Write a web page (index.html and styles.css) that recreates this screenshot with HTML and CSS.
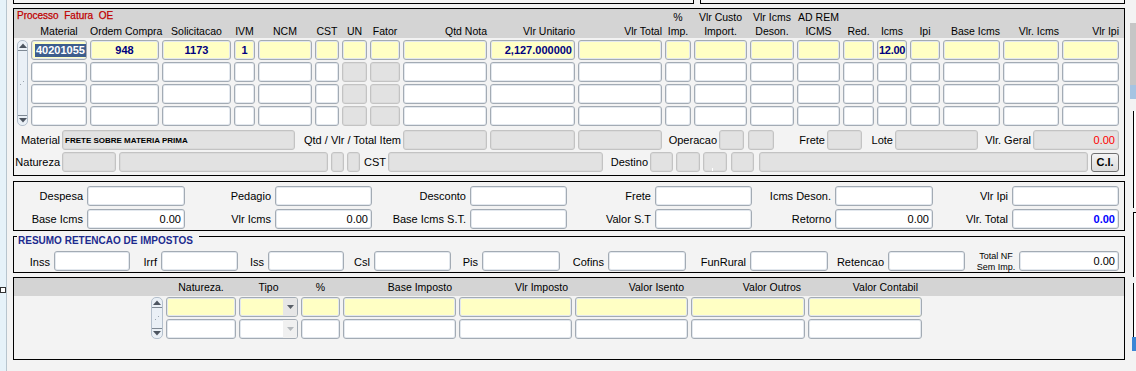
FILE: index.html
```html
<!DOCTYPE html>
<html lang="pt">
<head>
  <meta charset="UTF-8">
  <title>Processo Fatura OE</title>
  <link rel="stylesheet" href="styles.css">
</head>
<body>
  <div class="side"><span class="mark"></span></div>

  <div class="main">
    <div class="tops">
      <div class="tb1"></div>
      <div class="tb2"></div>
    </div>

    <!-- itens da nota -->
    <div class="frame f1">
      <div class="band">
        <div class="hgrid">
          <div class="title">Processo&nbsp; Fatura&nbsp; OE</div>
          <div class="h"></div>
          <div class="h c">Material</div>
          <div class="h c">Ordem Compra</div>
          <div class="h c">Solicitacao</div>
          <div class="h c">IVM</div>
          <div class="h c">NCM</div>
          <div class="h c">CST</div>
          <div class="h c">UN</div>
          <div class="h c">Fator</div>
          <div class="h r">Qtd Nota</div>
          <div class="h r">Vlr Unitario</div>
          <div class="h r">Vlr Total</div>
          <div class="h c">%<br>Imp.</div>
          <div class="h c">Vlr Custo<br>Import.</div>
          <div class="h c">Vlr Icms<br>Deson.</div>
          <div class="h c">AD REM<br>ICMS</div>
          <div class="h c">Red.</div>
          <div class="h c">Icms</div>
          <div class="h c">Ipi</div>
          <div class="h r">Base Icms</div>
          <div class="h r">Vlr. Icms</div>
          <div class="h r">Vlr Ipi</div>
        </div>
      </div>

      <div class="rows">
        <div class="sc">
          <div class="up"><svg width="8" height="5" viewBox="0 0 8 5"><path d="M0 5 L4 0.5 L8 5Z" fill="#4d5560"/></svg></div>
          <div class="mid"><svg width="5" height="5" viewBox="0 0 5 5"><rect x="3" y="0" width="1" height="1" fill="#9aa4ae"/><rect x="0" y="3" width="1" height="1" fill="#9aa4ae"/></svg></div>
          <div class="dn"><svg width="8" height="5" viewBox="0 0 8 5"><path d="M0 0 L4 4.5 L8 0Z" fill="#4d5560"/></svg></div>
        </div>

        <div class="f y"><span class="sel">40201055</span></div>
        <div class="f y v c">948</div>
        <div class="f y v c">1173</div>
        <div class="f y v c">1</div>
        <div class="f y"></div>
        <div class="f y"></div>
        <div class="f y"></div>
        <div class="f y"></div>
        <div class="f y"></div>
        <div class="f y v r">2,127.000000</div>
        <div class="f y"></div>
        <div class="f y"></div>
        <div class="f y"></div>
        <div class="f y"></div>
        <div class="f y"></div>
        <div class="f y"></div>
        <div class="f y v tight">12.00</div>
        <div class="f y"></div>
        <div class="f y"></div>
        <div class="f y"></div>
        <div class="f y"></div>

        <div class="f"></div><div class="f"></div><div class="f"></div><div class="f"></div><div class="f"></div><div class="f"></div>
        <div class="f g"></div><div class="f g"></div>
        <div class="f"></div><div class="f"></div><div class="f"></div><div class="f"></div><div class="f"></div><div class="f"></div><div class="f"></div>
        <div class="f"></div><div class="f"></div><div class="f"></div><div class="f"></div><div class="f"></div><div class="f"></div>

        <div class="f"></div><div class="f"></div><div class="f"></div><div class="f"></div><div class="f"></div><div class="f"></div>
        <div class="f g"></div><div class="f g"></div>
        <div class="f"></div><div class="f"></div><div class="f"></div><div class="f"></div><div class="f"></div><div class="f"></div><div class="f"></div>
        <div class="f"></div><div class="f"></div><div class="f"></div><div class="f"></div><div class="f"></div><div class="f"></div>

        <div class="f"></div><div class="f"></div><div class="f"></div><div class="f"></div><div class="f"></div><div class="f"></div>
        <div class="f g"></div><div class="f g"></div>
        <div class="f"></div><div class="f"></div><div class="f"></div><div class="f"></div><div class="f"></div><div class="f"></div><div class="f"></div>
        <div class="f"></div><div class="f"></div><div class="f"></div><div class="f"></div><div class="f"></div><div class="f"></div>
      </div>

      <div class="line l-mat">
        <span class="lb w48">Material</span>
        <div class="f g w233 tiny">FRETE SOBRE MATERIA PRIMA</div>
        <span class="lb w108">Qtd / Vlr / Total Item</span>
        <div class="f g w84"></div>
        <div class="f g w85 ml3"></div>
        <div class="f g w84 ml3"></div>
        <span class="lb w57">Operacao</span>
        <div class="f g w25"></div>
        <div class="f g w26 ml4"></div>
        <span class="lb w53">Frete</span>
        <div class="f g w35"></div>
        <span class="lb w33">Lote</span>
        <div class="f g w83"></div>
        <span class="lb w55">Vlr. Geral</span>
        <div class="f g w86 r red">0.00</div>
      </div>

      <div class="line l-nat">
        <span class="lb w48">Natureza</span>
        <div class="f g w54"></div>
        <div class="f g w209 ml3"></div>
        <div class="f g w13 ml3"></div>
        <div class="f g w13 ml3"></div>
        <span class="lb w28">CST</span>
        <div class="f g w215"></div>
        <span class="lb w47">Destino</span>
        <div class="f g w23"></div>
        <div class="f g w24 ml3"></div>
        <div class="f g w24 ml3 tick"></div>
        <div class="f g w23 ml4"></div>
        <div class="f g w329 ml5"></div>
        <button class="btn">C.I.</button>
      </div>
    </div>

    <!-- totais -->
    <div class="frame f2">
      <div class="tot">
        <span class="lb">Despesa</span><div class="f"></div>
        <span class="lb">Pedagio</span><div class="f"></div>
        <span class="lb">Desconto</span><div class="f"></div>
        <span class="lb">Frete</span><div class="f"></div>
        <span class="lb">Icms Deson.</span><div class="f"></div>
        <span class="lb">Vlr Ipi</span><div class="f"></div>

        <span class="lb">Base Icms</span><div class="f r">0.00</div>
        <span class="lb">Vlr Icms</span><div class="f r">0.00</div>
        <span class="lb">Base Icms S.T.</span><div class="f"></div>
        <span class="lb">Valor S.T</span><div class="f"></div>
        <span class="lb">Retorno</span><div class="f r">0.00</div>
        <span class="lb">Vlr. Total</span><div class="f r blue">0.00</div>
      </div>
    </div>

    <!-- retencoes -->
    <div class="frame f3">
      <div class="f3-head"><span>RESUMO RETENCAO DE IMPOSTOS</span></div>
      <div class="ret">
        <span class="lb">Inss</span><div class="f"></div>
        <span class="lb">Irrf</span><div class="f"></div>
        <span class="lb">Iss</span><div class="f"></div>
        <span class="lb">Csl</span><div class="f"></div>
        <span class="lb">Pis</span><div class="f"></div>
        <span class="lb">Cofins</span><div class="f"></div>
        <span class="lb">FunRural</span><div class="f"></div>
        <span class="lb">Retencao</span><div class="f"></div>
        <span class="lb small">Total NF<br>Sem Imp.</span><div class="f r">0.00</div>
      </div>
    </div>

    <!-- impostos -->
    <div class="frame f4">
      <div class="band4">
        <div class="g4">
          <div></div>
          <div class="h c">Natureza.</div>
          <div class="h c">Tipo</div>
          <div class="h c">%</div>
          <div class="h r">Base Imposto</div>
          <div class="h r">Vlr Imposto</div>
          <div class="h r">Valor Isento</div>
          <div class="h r">Valor Outros</div>
          <div class="h r">Valor Contabil</div>
        </div>
      </div>
      <div class="g4 rows4">
        <div class="sc">
          <div class="up"><svg width="8" height="5" viewBox="0 0 8 5"><path d="M0 5 L4 0.5 L8 5Z" fill="#4d5560"/></svg></div>
          <div class="mid"><svg width="5" height="5" viewBox="0 0 5 5"><rect x="3" y="0" width="1" height="1" fill="#9aa4ae"/><rect x="0" y="3" width="1" height="1" fill="#9aa4ae"/></svg></div>
          <div class="dn"><svg width="8" height="5" viewBox="0 0 8 5"><path d="M0 0 L4 4.5 L8 0Z" fill="#4d5560"/></svg></div>
        </div>
        <div class="f y"></div>
        <div class="f y dd"><span></span><i><svg width="7" height="4" viewBox="0 0 7 4"><path d="M0 0 L3.5 4 L7 0Z" fill="#5a6068"/></svg></i></div>
        <div class="f y"></div>
        <div class="f y"></div>
        <div class="f y"></div>
        <div class="f y"></div>
        <div class="f y"></div>
        <div class="f y"></div>

        <div class="f"></div>
        <div class="f dd off"><span></span><i><svg width="7" height="4" viewBox="0 0 7 4"><path d="M0 0 L3.5 4 L7 0Z" fill="#b4b8bc"/></svg></i></div>
        <div class="f"></div>
        <div class="f"></div>
        <div class="f"></div>
        <div class="f"></div>
        <div class="f"></div>
        <div class="f"></div>
      </div>
    </div>
  </div>

  <!-- borda da janela de tras -->
  <div class="edge">
    <div class="e-gray"></div>
    <div class="e-blue"></div>
    <div class="e-gap"></div>
    <div class="e-box e1"></div>
    <div class="e-box e2"></div>
    <div class="e-box e3"></div>
    <div class="e-dark"></div>
  </div>
</body>
</html>
```

FILE: styles.css
```css
body {
  margin: 0;
  width: 1136px;
  height: 371px;
  overflow: hidden;
  display: flex;
  position: relative;
  background: #f3f3f3;
  font-family: "Liberation Sans", Arial, sans-serif;
  font-size: 11px;
  color: #000;
}
.side {
  flex: none;
  width: 6px;
  background: #e6f2f9;
  border-right: 1px solid #b8c5ce;
  position: relative;
}
.side .mark {
  position: absolute;
  left: 0;
  top: 287px;
  width: 4px;
  height: 4px;
  background: #fff;
  border: 1px solid #333;
}
.main {
  flex: none;
  width: 1112px;
  margin-left: 6px;
}

/* pedaco das janelas de cima */
.tops {
  display: flex;
  gap: 6px;
  height: 4px;
}
.tops div {
  box-sizing: border-box;
  height: 4px;
  border: 1px solid #000;
  border-top: none;
  background: #f7f7f7;
}
.tb1 { width: 681px; }
.tb2 { width: 425px; }

.frame {
  border: 1px solid #000;
}
.f1 { margin-top: 4px; }

/* cabecalho da grade */
.band {
  background: #d4d4d4;
  height: 29px;
  padding-left: 3px;
}
.hgrid, .rows {
  display: grid;
  grid-template-columns: 11px 56px 69px 69px 21px 54px 24px 25px 30px 84px 85px 84px 26px 53px 44px 43px 31px 30px 30px 57px 56px 57px;
  column-gap: 3px;
}
.hgrid {
  grid-template-rows: 15px 14px;
  height: 29px;
}
.title {
  grid-row: 1;
  grid-column: 1 / span 8;
  color: #c00000;
  font-size: 10px;
  line-height: 12px;
  padding-top: 1px;
  white-space: nowrap;
  -webkit-text-stroke: 0.25px #c00000;
}
.h {
  grid-row: 2;
  align-self: end;
  font-size: 10.5px;
  line-height: 14px;
  white-space: nowrap;
}
.c { text-align: center; justify-content: center; }
.r { text-align: right; justify-content: flex-end; }

.rows {
  grid-template-rows: repeat(4, 20px);
  row-gap: 2px;
  padding: 2px 0 0 3px;
}

/* campos */
.f {
  box-sizing: border-box;
  height: 20px;
  border: 1px solid #a3abb4;
  border-radius: 3px;
  background: #fff;
  box-shadow: inset 0 0 0 1px #e3e8ee;
  display: flex;
  align-items: center;
  padding: 0 3px;
  overflow: hidden;
  white-space: nowrap;
  flex: none;
}
.f.y { background: #ffffc4; }
.f.g {
  background: #e2e2e2;
  border-color: #c3c3c3;
  box-shadow: inset 0 0 0 1px #dadada;
}
.v {
  font-weight: bold;
  color: #000080;
}
.v.r { padding-right: 2px; }
.tight {
  padding: 0 0 0 1px;
  letter-spacing: -0.3px;
}
.sel {
  background: #3d5d8d;
  color: #fff;
  font-weight: bold;
  line-height: 13px;
  padding: 0 1px;
}
.red { color: #ff0000; }
.blue { color: #0000ff; font-weight: bold; }
.tiny {
  font-size: 8px;
  font-weight: bold;
  padding-left: 2px;
}

/* controle de rolagem */
.sc {
  grid-column: 1;
  grid-row: 1 / span 4;
  box-sizing: border-box;
  display: flex;
  flex-direction: column;
  border: 1px solid #b3bfcc;
  border-radius: 5px;
  background: #eaf0f6;
}
.sc .up, .sc .dn {
  height: 9px;
  display: flex;
  align-items: center;
  justify-content: center;
}
.sc .up { border-bottom: 1px solid #7f8994; }
.sc .dn { border-top: 1px solid #7f8994; }
.sc .mid {
  flex: 1;
  display: flex;
  align-items: center;
  justify-content: center;
}

/* linhas de detalhe */
.line {
  display: flex;
  align-items: center;
  height: 20px;
}
.l-mat { margin-top: 4px; }
.l-nat { margin-top: 2px; margin-bottom: 3px; }
.lb {
  box-sizing: border-box;
  flex: none;
  text-align: right;
  padding-right: 2px;
  white-space: nowrap;
}
.w13 { width: 13px; } .w23 { width: 23px; } .w24 { width: 24px; } .w25 { width: 25px; }
.w26 { width: 26px; } .w28 { width: 28px; } .w33 { width: 33px; } .w35 { width: 35px; }
.w47 { width: 47px; } .w48 { width: 48px; } .w53 { width: 53px; } .w54 { width: 54px; }
.w55 { width: 55px; } .w57 { width: 57px; } .w83 { width: 83px; } .w84 { width: 84px; }
.w85 { width: 85px; } .w86 { width: 86px; } .w108 { width: 108px; } .w209 { width: 209px; }
.w215 { width: 215px; } .w233 { width: 233px; } .w329 { width: 329px; }
.ml3 { margin-left: 3px; } .ml4 { margin-left: 4px; } .ml5 { margin-left: 5px; }
.tick { position: relative; }
.tick::after {
  content: '';
  position: absolute;
  left: 8px;
  bottom: 0;
  width: 1px;
  height: 3px;
  background: #fff;
}
.btn {
  box-sizing: border-box;
  margin-left: 3px;
  width: 28px;
  height: 19px;
  padding: 0;
  border: 1px solid #707070;
  border-radius: 3px;
  background: linear-gradient(#f4f4f4, #dcdcdc);
  font-family: "Liberation Sans", Arial, sans-serif;
  font-size: 11px;
  font-weight: bold;
  color: #000;
}

/* totais */
.f2 { margin-top: 5px; }
.tot {
  display: grid;
  grid-template-columns: 73px 98px 90px 97px 98px 97px 88px 97px 83px 98px 79px 107px;
  grid-template-rows: 20px 20px;
  row-gap: 3px;
  padding: 4px 0 1px 0;
}
.tot .lb, .ret .lb {
  align-self: center;
  padding-right: 4px;
}

/* retencoes */
.f3 {
  margin-top: 5px;
  border-top: none;
}
.f3-head {
  display: flex;
  height: 12px;
}
.f3-head::before {
  content: '';
  width: 3px;
  border-top: 1px solid #000;
}
.f3-head::after {
  content: '';
  flex: 1;
  border-top: 1px solid #000;
  margin-left: 6px;
}
.f3-head span {
  font-size: 10px;
  font-weight: bold;
  color: #1b2a8e;
  line-height: 10px;
  padding-left: 1px;
  white-space: nowrap;
}
.ret {
  display: grid;
  grid-template-columns: 40px 76px 31px 77px 30px 76px 30px 77px 31px 78px 48px 78px 64px 78px 60px 77px 54px 100px;
  height: 20px;
  padding: 3px 0 1px 0;
}
.ret .small {
  font-size: 9px;
  line-height: 11px;
  text-align: center;
  padding-left: 8px;
  padding-right: 0;
}

/* impostos */
.f4 {
  margin-top: 4px;
  height: 81px;
}
.band4 {
  background: #d4d4d4;
  height: 18px;
}
.g4 {
  display: grid;
  grid-template-columns: 12px 70px 59px 39px 113px 113px 113px 114px 114px;
  column-gap: 3px;
  padding-left: 137px;
}
.band4 .h {
  grid-row: auto;
  line-height: 18px;
}
.band4 .h.r { padding-right: 4px; }
.rows4 {
  grid-template-rows: 20px 20px;
  row-gap: 2px;
  padding-top: 1px;
}
.rows4 .sc { grid-row: 1 / span 2; }
.rows4 .sc .mid svg { margin-top: 1px; }
.dd {
  padding: 0;
}
.dd span { flex: 1; }
.dd i {
  width: 14px;
  height: 100%;
  display: flex;
  align-items: center;
  justify-content: center;
  background: #e6e6e6;
}
.dd.off i { background: #f0f0f0; }

/* janela de tras, cortada na direita */
.edge {
  position: absolute;
  left: 1130px;
  top: 0;
  width: 6px;
  height: 371px;
  display: flex;
  flex-direction: column;
}
.e-gray {
  margin-top: 23px;
  height: 62px;
  background: #c6c6c6;
}
.e-blue {
  height: 14px;
  background: #a6c4e2;
}
.e-gap { height: 12px; }
.e-box {
  margin-left: 3px;
  border-left: 1px solid #000;
  background: #fff;
}
.e1 { height: 97px; }
.e2 { height: 64px; margin-top: 4px; border-top: 1px solid #000; }
.e3 { height: 54px; margin-top: 6px; }
.e-dark {
  height: 14px;
  margin-left: 2px;
  background: #3b86d6;
}
```
